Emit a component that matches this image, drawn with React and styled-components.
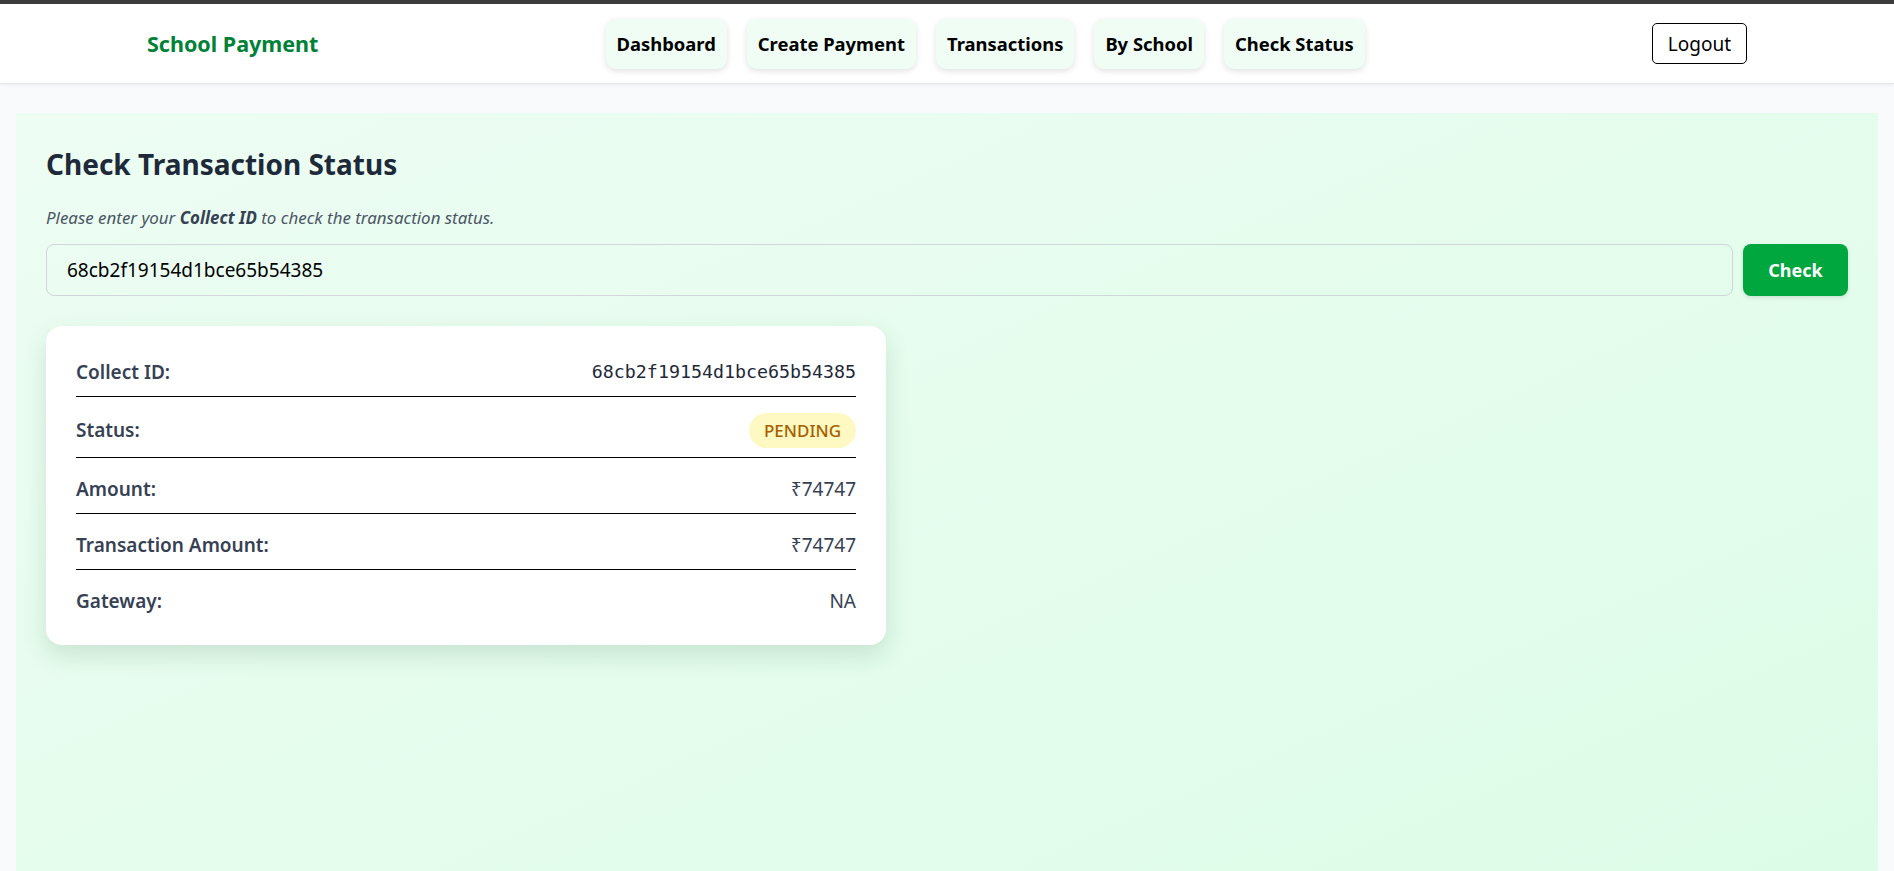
import React, { useState } from 'react';
import styled, { createGlobalStyle } from 'styled-components';

const GlobalStyle = createGlobalStyle`
  body {
    margin: 0;
    font-family: "Noto Sans", "Open Sans", sans-serif;
    background: #f9fafb;
  }
  * { box-sizing: border-box; }
`;

const Header = styled.header`
  background: #fff;
  border-top: 4px solid #3c3c3c;
  border-bottom: 1px solid #e5e7eb;
  box-shadow: 0 1px 4px rgba(0,0,0,0.06);
`;

const HeaderInner = styled.div`
  max-width: 1600px;
  height: 79px;
  margin: 0 auto;
  display: flex;
  align-items: center;
  justify-content: space-between;
`;

const Brand = styled.div`
  font-size: 21.5px;
  font-weight: 700;
  color: #008236;
`;

const Nav = styled.nav`
  display: flex;
  gap: 20px;
`;

const NavButton = styled.button`
  height: 50px;
  padding: 0 11px;
  border: none;
  border-radius: 10px;
  background: #f0fdf4;
  box-shadow: 0 2px 6px rgba(0,0,0,0.12);
  font-family: inherit;
  font-size: 18.4px;
  font-weight: 700;
  color: #000;
  cursor: pointer;
`;

const LogoutButton = styled.button`
  height: 41px;
  padding: 0 15px;
  background: #fff;
  border: 1px solid #000;
  border-radius: 5px;
  font-family: inherit;
  font-size: 19px;
  color: #000;
`;

const Main = styled.main`
  padding: 29px 16px 0;
`;

const Panel = styled.section`
  min-height: 820px;
  padding: 35px 30px;
  background: linear-gradient(to bottom right, #edfdf3, #dcfce7);
`;

const Title = styled.h1`
  margin: 0;
  font-size: 28px;
  line-height: 1.2;
  font-weight: 700;
  color: #1e2939;
`;

const Hint = styled.p`
  margin: 23px 0 14px;
  font-size: 16.9px;
  line-height: 25px;
  font-style: italic;
  color: #4a5565;
  b { font-weight: 700; color: #364153; }
`;

const Form = styled.div`
  display: flex;
  gap: 10px;
`;

const Input = styled.input`
  flex: 1;
  height: 52px;
  padding: 0 20px;
  border: 1px solid #d1d5dc;
  border-radius: 8px;
  background: transparent;
  font-family: inherit;
  font-size: 19px;
  color: #000;
  outline: none;
`;

const CheckButton = styled.button`
  width: 105px;
  height: 52px;
  border: none;
  border-radius: 8px;
  background: #00a63e;
  color: #fff;
  font-family: inherit;
  font-size: 18px;
  font-weight: 700;
  box-shadow: 0 2px 4px rgba(0,0,0,0.1);
`;

const Card = styled.div`
  width: 840px;
  margin-top: 30px;
  padding: 15px 30px 20px;
  background: #fff;
  border-radius: 16px;
  box-shadow: 0 10px 25px rgba(20,80,40,0.14);
`;

const Row = styled.div`
  display: flex;
  align-items: center;
  justify-content: space-between;
  padding: 16px 0 9px;
  border-bottom: 1px solid #000;
  font-size: 19px;
  line-height: 30px;
  color: #364153;
  &:last-child { border-bottom: none; }
`;

const Label = styled.span`
  font-weight: 600;
`;

const Value = styled.span`
  font-family: ${p => (p.mono ? '"DejaVu Sans Mono", "Liberation Mono", monospace' : 'inherit')};
  font-size: ${p => (p.mono ? '18.3px' : '19px')};
  color: ${p => (p.mono ? '#1e2939' : '#364153')};
`;

const Badge = styled.span`
  height: 35px;
  line-height: 35px;
  padding: 0 15px;
  border-radius: 999px;
  background: #fef9c2;
  color: #a65f00;
  font-size: 17px;
  font-weight: 500;
`;

const navItems = ['Dashboard', 'Create Payment', 'Transactions', 'By School', 'Check Status'];

const result = {
  collectId: '68cb2f19154d1bce65b54385',
  status: 'pending',
  amount: 74747,
  transactionAmount: 74747,
  gateway: 'NA',
};

export default function App() {
  const [id, setId] = useState('68cb2f19154d1bce65b54385');

  return (
    <>
      <GlobalStyle />
      <Header>
        <HeaderInner>
          <Brand>School Payment</Brand>
          <Nav>
            {navItems.map(item => (
              <NavButton key={item}>{item}</NavButton>
            ))}
          </Nav>
          <LogoutButton>Logout</LogoutButton>
        </HeaderInner>
      </Header>
      <Main>
        <Panel>
          <Title>Check Transaction Status</Title>
          <Hint>
            Please enter your <b>Collect ID</b> to check the transaction status.
          </Hint>
          <Form>
            <Input value={id} onChange={e => setId(e.target.value)} />
            <CheckButton>Check</CheckButton>
          </Form>
          <Card>
            <Row>
              <Label>Collect ID:</Label>
              <Value mono>{result.collectId}</Value>
            </Row>
            <Row>
              <Label>Status:</Label>
              <Badge>{result.status.toUpperCase()}</Badge>
            </Row>
            <Row>
              <Label>Amount:</Label>
              <Value>₹{result.amount}</Value>
            </Row>
            <Row>
              <Label>Transaction Amount:</Label>
              <Value>₹{result.transactionAmount}</Value>
            </Row>
            <Row>
              <Label>Gateway:</Label>
              <Value>{result.gateway}</Value>
            </Row>
          </Card>
        </Panel>
      </Main>
    </>
  );
}
